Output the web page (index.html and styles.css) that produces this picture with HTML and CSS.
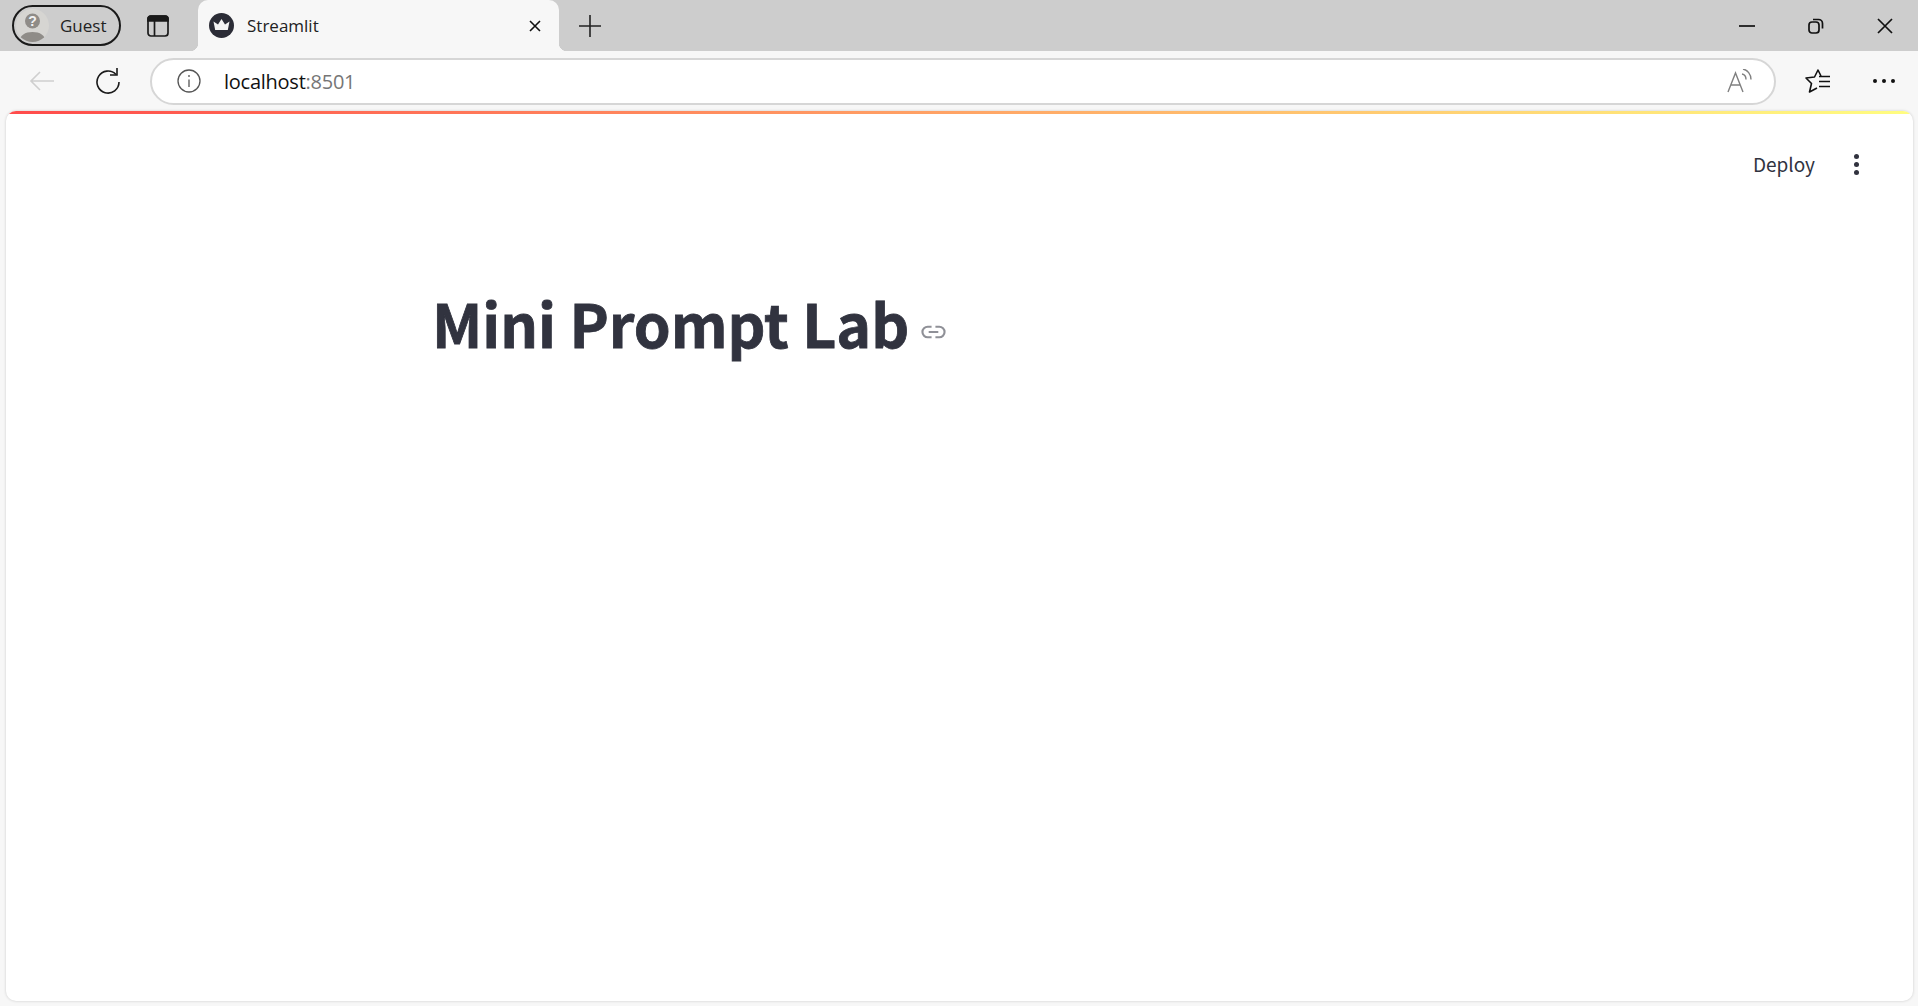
FILE: index.html
```html
<!DOCTYPE html>
<html lang="en">
<head>
  <meta charset="UTF-8" />
  <title>Streamlit</title>
  <link rel="stylesheet" href="styles.css">
</head>
<body>
  <div class="tabbar">
    <div class="guest">
      <svg class="avatar" width="33" height="33" viewBox="0 0 33 33">
        <clipPath id="avatar-clip"><circle cx="16.5" cy="16.5" r="16.5"/></clipPath>
        <circle cx="16.5" cy="16.5" r="16.5" fill="#d6d5d2"/>
        <g clip-path="url(#avatar-clip)">
          <circle cx="16.5" cy="12" r="7.5" fill="#8f8c88"/>
          <path d="M3 33c1-7 6-10 13.500-10S29 26 30 33z" fill="#8f8c88"/>
        </g>
        <text x="16.5" y="17" text-anchor="middle" class="avatar-q">?</text>
      </svg>
      <span>Guest</span>
    </div>
    <svg class="tabs-icon" width="22" height="22" viewBox="0 0 22 22" fill="none" stroke="#1a1a1a" stroke-width="1.700">
      <rect x="1" y="1" width="20" height="20" rx="3"/>
      <path d="M1 3.500a2.500 2.500 0 0 1 2.500-2.500h15a2.500 2.500 0 0 1 2.500 2.500V6H1z" fill="#1a1a1a"/>
      <path d="M7.500 6v15"/>
    </svg>
    <div class="tab">
      <svg class="favicon" width="25" height="25" viewBox="0 0 25 25">
        <circle cx="12.500" cy="12.500" r="12.500" fill="#2b2c36"/>
        <path d="M4.500 8.500l4.500 3L12.500 6l3.500 5.500 4.500-3-1.700 8.500H6.200z" fill="#f4f4f4"/>
      </svg>
      <span class="tab-title">Streamlit</span>
      <svg class="tab-close" width="14" height="14" viewBox="0 0 14 14" stroke="#111" stroke-width="1.600">
        <path d="M2 2l10 10M12 2L2 12"/>
      </svg>
    </div>
    <svg class="new-tab" width="22" height="22" viewBox="0 0 22 22" stroke="#222" stroke-width="1.600">
      <path d="M11 0v22M0 11h22"/>
    </svg>
    <div class="window-btns">
      <svg width="16" height="16" viewBox="0 0 16 16" stroke="#111" stroke-width="1.700"><path d="M0 8h16"/></svg>
      <svg width="16" height="16" viewBox="0 0 16 16" fill="none" stroke="#111" stroke-width="1.700">
        <rect x="1" y="4" width="10" height="11" rx="3"/>
        <path d="M5 1.500h5.500A4 4 0 0 1 14.500 5.500v5"/>
      </svg>
      <svg width="16" height="16" viewBox="0 0 16 16" stroke="#111" stroke-width="1.700"><path d="M1 1l14 14M15 1L1 15"/></svg>
    </div>
  </div>

  <div class="toolbar">
    <svg class="back" width="26" height="22" viewBox="0 0 26 22" fill="none" stroke="#cfcfcf" stroke-width="1.600">
      <path d="M25 11H2M11 2l-9 9 9 9"/>
    </svg>
    <svg class="reload" width="26" height="28" viewBox="0 0 26 28" fill="none" stroke="#1a1a1a" stroke-width="1.600">
      <path d="M21 7.500A11 11 0 1 0 24 15"/>
      <path d="M22 1v7h-7"/>
    </svg>
    <div class="address">
      <svg class="info" width="24" height="24" viewBox="0 0 24 24" fill="none" stroke="#555" stroke-width="1.300">
        <circle cx="12" cy="12" r="11"/>
        <path d="M12 10.500v7.500M12 6v2"/>
      </svg>
      <span class="url">localhost<span class="port">:8501</span></span>
      <svg class="read-aloud" width="26" height="24" viewBox="0 0 26 24" fill="none" stroke="#808080" stroke-width="1.400">
        <path d="M1 23L8.500 4 16 23M4 16h9"/>
        <path d="M15 5c2.500 .5 4 2.500 4 5.500M16 0c4.500 1 8 5 8 10.500"/>
      </svg>
    </div>
    <svg class="favs" width="26" height="24" viewBox="0 0 26 24" fill="none" stroke="#111" stroke-width="1.600" stroke-linejoin="round">
      <path d="M16 7L13 1 9.500 8 1 9l5.500 5.500L4.500 23l7.500-4"/>
      <path d="M14 7.500h11M14 12.500h11M14 17.500h11"/>
    </svg>
    <div class="more"><i></i><i></i><i></i></div>
  </div>

  <main class="page">
    <div class="rainbow"></div>
    <header class="app-header">
      <span class="deploy">Deploy</span>
      <div class="kebab"><i></i><i></i><i></i></div>
    </header>
    <div class="block">
      <h1>Mini Prompt Lab</h1>
      <svg class="anchor" width="25" height="14" viewBox="0 0 26 14" fill="none" stroke="#8f9097" stroke-width="2.200">
        <path d="M11 1.500H7a5.500 5.500 0 0 0 0 11h4M15 1.500h4a5.500 5.500 0 0 1 0 11h-4M8 7h10"/>
      </svg>
    </div>
  </main>
</body>
</html>
```

FILE: styles.css
```css
* { box-sizing: border-box; }
html, body { height: 100%; }
body { margin: 0; background: #f7f7f7; overflow: hidden; display: flex; flex-direction: column; font-family: "Open Sans", "Liberation Sans", sans-serif; }
svg { display: block; flex: none; }

.tabbar { height: 51px; background: #cdcdcd; display: flex; align-items: center; padding-left: 12px; flex: none; }
.guest { width: 109px; height: 41px; border: 2px solid #1a1a1a; border-radius: 21px; display: flex; align-items: center; gap: 11px; padding-left: 2px; font-size: 17px; color: #222; }
.avatar-q { font: bold 14px "Liberation Sans", sans-serif; fill: #f2f2f2; }
.tabs-icon { margin-left: 26px; }
.tab { position: relative; width: 361px; height: 51px; margin-left: 29px; background: #f7f7f7; border-radius: 10px 10px 0 0; display: flex; align-items: center; padding: 0 17px 0 11px; align-self: flex-start; }
.tab::before, .tab::after { content: ""; position: absolute; bottom: 0; width: 8px; height: 8px; }
.tab::before { left: -8px; background: radial-gradient(circle at 0 0, transparent 8px, #f7f7f7 8.500px); }
.tab::after { right: -8px; background: radial-gradient(circle at 100% 0, transparent 8px, #f7f7f7 8.500px); }
.tab-title { margin-left: 13px; font-size: 17px; color: #222; flex: 1; }
.new-tab { margin-left: 20px; }
.window-btns { margin-left: auto; display: flex; gap: 53px; padding-right: 25px; }

.toolbar { height: 60px; display: flex; align-items: center; flex: none; padding-left: 29px; }
.reload { margin-left: 40px; }
.address { width: 1626px; height: 47px; margin-left: 29px; background: #fff; border: 2px solid #d6d6d6; border-radius: 24px; display: flex; align-items: center; padding: 0 21px 0 25px; }
.url { margin-left: 23px; font-size: 20px; color: #111; flex: 1; letter-spacing: -0.250px; }
.port { color: #767676; }
.favs { margin-left: 29px; }
.more { margin-left: 42px; display: flex; gap: 5px; }
.more i { width: 4px; height: 4px; border-radius: 50%; background: #111; }

.page { flex: 1; margin: 0 5px 5px 6px; background: #fff; border-radius: 10px; box-shadow: 0 0 3px rgba(0,0,0,.18); overflow: hidden; min-height: 0; }
.rainbow { height: 3px; background: linear-gradient(90deg, #ff4b4b, #fffd80); }
.app-header { height: 100px; display: flex; align-items: center; justify-content: flex-end; padding: 0 54px 0 0; }
.deploy { font: 19px "Noto Sans CJK SC", "Noto Sans", sans-serif; color: #31333f; margin: 0 39px 2px 0; }
.kebab { display: flex; flex-direction: column; gap: 3px; }
.kebab i { width: 5px; height: 5px; border-radius: 50%; background: #31333f; }
.block { display: flex; align-items: center; padding: 0 0 0 426px; margin-top: 74px; }
h1 { margin: 0; font: 700 59px/1.200 "Noto Sans CJK SC", "Noto Sans", sans-serif; color: #31333f; -webkit-text-stroke: 0.8px #31333f; }
.anchor { margin: 18px 0 0 12px; }
```
